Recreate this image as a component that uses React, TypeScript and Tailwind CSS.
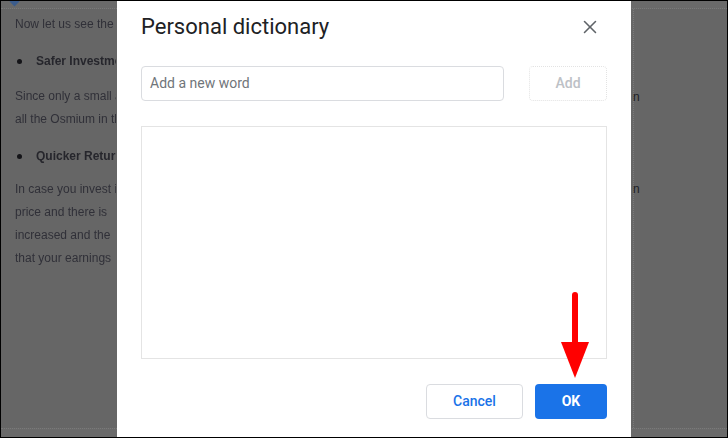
import { X } from 'lucide-react'

const docFont = { fontFamily: '"Liberation Sans", Arial, sans-serif' }

function Bullet({ children }: { children: React.ReactNode }) {
  return (
    <div className="flex items-center gap-[14px] font-bold text-[#26262c]">
      <span className="shrink-0 w-[5px] h-[5px] ml-[2px] rounded-full bg-[#141418]" />
      <span>{children}</span>
    </div>
  )
}

function DocBackground() {
  return (
    <div className="absolute inset-0 flex flex-col bg-[#666666]" style={docFont}>
      {/* toolbar strip */}
      <div className="h-[8px] shrink-0 border-b border-dotted border-[#7a7a7a] bg-[#6a6a6a] relative">
        <div className="absolute left-[10px] -top-[3px] w-[7px] h-[7px] rotate-45 bg-[#3b5c8c]" />
      </div>
      <div className="flex-1 flex">
        {/* left part of the page, the rest lies under the dialog */}
        <div className="w-[101px] ml-[14px] overflow-hidden pt-[4px] text-[12px] leading-[23px] text-[#303038] whitespace-nowrap blur-[0.6px]">
          <p>Now let us see the benefits</p>
          <div className="mt-[14px]">
            <Bullet>Safer Investment</Bullet>
          </div>
          <div className="mt-[12px]">
            <p>Since only a small amount</p>
            <p>all the Osmium in the world</p>
          </div>
          <div className="mt-[14px]">
            <Bullet>Quicker Returns</Bullet>
          </div>
          <div className="mt-[10px]">
            <p>In case you invest in it</p>
            <p>price and there is</p>
            <p>increased and the</p>
            <p>that your earnings</p>
          </div>
        </div>
        {/* right edge of the page */}
        <div className="ml-[516px] w-[2px] border-r border-dotted border-[#7a7a7a] relative text-[12px] leading-[23px] text-[#1e1e26]">
          <span className="absolute left-[1px] top-[77px]">n</span>
          <span className="absolute left-[1px] top-[169px]">n</span>
        </div>
      </div>
      <div className="h-[9px] shrink-0 border-t border-dotted border-[#7a7a7a] bg-[#6a6a6a]" />
    </div>
  )
}

function Dialog() {
  return (
    <div
      className="absolute left-[116px] top-0 bottom-0 w-[514px] bg-white px-[24px] flex flex-col"
      style={{ fontFamily: 'Roboto, "Noto Sans", sans-serif' }}
    >
      <div className="mt-[12px] h-[28px] flex items-center justify-between">
        <h1 className="text-[22px] leading-[28px] text-[#202124]">Personal dictionary</h1>
        <X size={22} strokeWidth={1.7} className="text-[#5f6368] mr-[6px]" />
      </div>

      <div className="mt-[25px] flex gap-[25px]">
        <div className="w-[363px] h-[35px] rounded-[4px] border border-[#dadce0] flex items-center px-[8px] text-[14px] text-[#70757a]">
          Add a new word
        </div>
        <div className="flex-1 h-[35px] rounded-[4px] border border-dotted border-[#e3e3e3] flex items-center justify-center text-[14px] font-medium text-[#bdc1c6]">
          Add
        </div>
      </div>

      <div className="mt-[25px] h-[233px] border border-[#e4e4e4]" />

      <div className="mt-[25px] flex justify-end gap-[12px]">
        <button className="w-[97px] h-[35px] rounded-[4px] border border-[#dadce0] bg-white text-[14px] font-medium text-[#1a73e8]">
          Cancel
        </button>
        <button className="w-[72px] h-[35px] rounded-[4px] bg-[#1a73e8] text-[14px] font-bold text-white">
          OK
        </button>
      </div>
    </div>
  )
}

export default function App() {
  return (
    <div className="w-[728px] h-[438px] border border-black">
      <div className="relative w-full h-full overflow-hidden">
        <DocBackground />
        <Dialog />
        {/* annotation arrow */}
        <svg className="absolute left-[558px] top-[288px]" width="34" height="92" viewBox="0 0 34 92">
          <line x1="16" y1="6" x2="16" y2="60" stroke="#ff0000" strokeWidth="6" strokeLinecap="round" />
          <polygon points="2,53 30,53 16,89" fill="#ff0000" />
        </svg>
      </div>
    </div>
  )
}
